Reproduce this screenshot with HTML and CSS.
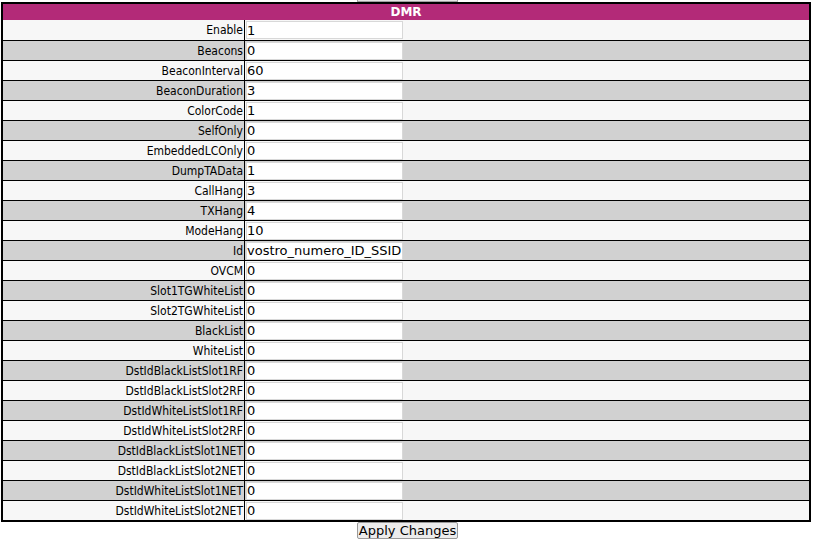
FILE: index.html
```html
<!DOCTYPE html>
<html>
<head>
<meta charset="utf-8">
<link rel="stylesheet" href="styles.css">
</head>
<body>
<div class="prev"><span class="prev-btn"></span></div>
<table class="cfg">
<tr><th colspan="2">DMR</th></tr>
<tr class="odd"><td class="lbl">Enable</td><td class="val"><input value="1"></td></tr>
<tr class="even"><td class="lbl">Beacons</td><td class="val"><input value="0"></td></tr>
<tr class="odd"><td class="lbl">BeaconInterval</td><td class="val"><input value="60"></td></tr>
<tr class="even"><td class="lbl">BeaconDuration</td><td class="val"><input value="3"></td></tr>
<tr class="odd"><td class="lbl">ColorCode</td><td class="val"><input value="1"></td></tr>
<tr class="even"><td class="lbl">SelfOnly</td><td class="val"><input value="0"></td></tr>
<tr class="odd"><td class="lbl">EmbeddedLCOnly</td><td class="val"><input value="0"></td></tr>
<tr class="even"><td class="lbl">DumpTAData</td><td class="val"><input value="1"></td></tr>
<tr class="odd"><td class="lbl">CallHang</td><td class="val"><input value="3"></td></tr>
<tr class="even"><td class="lbl">TXHang</td><td class="val"><input value="4"></td></tr>
<tr class="odd"><td class="lbl">ModeHang</td><td class="val"><input value="10"></td></tr>
<tr class="even"><td class="lbl">Id</td><td class="val"><input value="vostro_numero_ID_SSID"></td></tr>
<tr class="odd"><td class="lbl">OVCM</td><td class="val"><input value="0"></td></tr>
<tr class="even"><td class="lbl">Slot1TGWhiteList</td><td class="val"><input value="0"></td></tr>
<tr class="odd"><td class="lbl">Slot2TGWhiteList</td><td class="val"><input value="0"></td></tr>
<tr class="even"><td class="lbl">BlackList</td><td class="val"><input value="0"></td></tr>
<tr class="odd"><td class="lbl">WhiteList</td><td class="val"><input value="0"></td></tr>
<tr class="even"><td class="lbl">DstIdBlackListSlot1RF</td><td class="val"><input value="0"></td></tr>
<tr class="odd"><td class="lbl">DstIdBlackListSlot2RF</td><td class="val"><input value="0"></td></tr>
<tr class="even"><td class="lbl">DstIdWhiteListSlot1RF</td><td class="val"><input value="0"></td></tr>
<tr class="odd"><td class="lbl">DstIdWhiteListSlot2RF</td><td class="val"><input value="0"></td></tr>
<tr class="even"><td class="lbl">DstIdBlackListSlot1NET</td><td class="val"><input value="0"></td></tr>
<tr class="odd"><td class="lbl">DstIdBlackListSlot2NET</td><td class="val"><input value="0"></td></tr>
<tr class="even"><td class="lbl">DstIdWhiteListSlot1NET</td><td class="val"><input value="0"></td></tr>
<tr class="odd"><td class="lbl">DstIdWhiteListSlot2NET</td><td class="val"><input value="0"></td></tr>
</table>
<div class="actions"><button class="apply">Apply Changes</button></div>
<div class="rule"></div>
</body>
</html>
```
FILE: styles.css
```css
html, body {
  margin: 0;
  padding: 0;
  background: #ffffff;
}
body {
  font-family: "DejaVu Sans Condensed", "DejaVu Sans", Verdana, sans-serif;
  font-stretch: condensed;
  font-size: 12px;
  color: #000;
}
.prev {
  height: 2px;
  display: flex;
  justify-content: center;
}
.prev-btn {
  display: block;
  width: 99px;
  height: 1px;
  background: #e6e6e6;
  border: 1px solid #a0a0a0;
  border-top: none;
}
.cfg {
  margin-left: 1px;
  width: 810px;
  border-collapse: collapse;
  border: 2px solid #000;
}
.cfg th {
  height: 16px;
  padding: 0;
  background: #b32a78;
  color: #fff;
  font-weight: bold;
  font-size: 12px;
  font-family: "DejaVu Sans", Verdana, sans-serif;
  font-stretch: normal;
  text-align: center;
  line-height: 16px;
}
.cfg td {
  padding: 0;
  height: 19px;
  border-top: 1px solid #000;
  vertical-align: middle;
}
.cfg tr:nth-child(2) td {
  border-top: none;
  height: 20px;
}
.odd td { background: #f7f7f7; }
.even td { background: #d1d1d1; }
.lbl {
  width: 240px;
  text-align: right;
  padding-right: 1px !important;
  border-right: 1px solid #000;
}
.val {
  padding-left: 1px !important;
}
.val input {
  display: block;
  box-sizing: border-box;
  width: 157px;
  height: 18px;
  margin: 0;
  padding: 0;
  border: 1px solid #d8d8d8;
  background: #fff;
  font-family: "DejaVu Sans", Verdana, sans-serif;
  font-stretch: normal;
  font-size: 13px;
  color: #000;
}
.actions {
  display: flex;
  justify-content: center;
  height: 18px;
}
.apply {
  box-sizing: border-box;
  height: 17px;
  padding: 0 1px;
  font-family: "DejaVu Sans", Verdana, sans-serif;
  font-stretch: normal;
  font-size: 13px;
  line-height: 15px;
  background: #ececec;
  border: 1px solid #9a9a9a;
  border-radius: 2px;
  color: #000;
}
.rule {
  height: 1px;
  background: #000;
}
```
